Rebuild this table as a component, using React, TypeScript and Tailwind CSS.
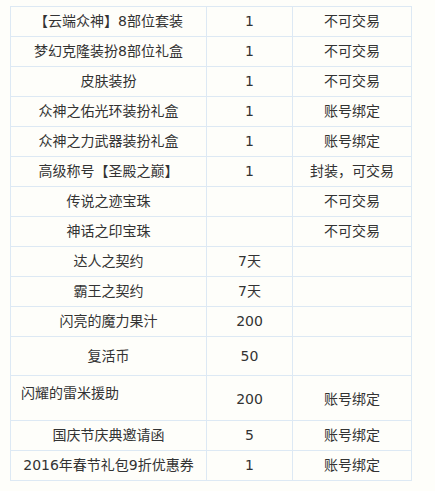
import React from "react";

const rows = [
  { name: "【云端众神】8部位套装", count: "1", note: "不可交易" },
  { name: "梦幻克隆装扮8部位礼盒", count: "1", note: "不可交易" },
  { name: "皮肤装扮", count: "1", note: "不可交易" },
  { name: "众神之佑光环装扮礼盒", count: "1", note: "账号绑定" },
  { name: "众神之力武器装扮礼盒", count: "1", note: "账号绑定" },
  { name: "高级称号【圣殿之巅】", count: "1", note: "封装，可交易" },
  { name: "传说之迹宝珠", count: "", note: "不可交易" },
  { name: "神话之印宝珠", count: "", note: "不可交易" },
  { name: "达人之契约", count: "7天", note: "" },
  { name: "霸王之契约", count: "7天", note: "" },
  { name: "闪亮的魔力果汁", count: "200", note: "" },
];

const cell = "border border-[#dde9f4] text-center align-middle p-0";

export default function App() {
  return (
    <div
      className="min-h-screen bg-[#fefefa] pl-[10px] pt-[6px] text-[14px] text-[#333333]"
      style={{ fontFamily: '"DejaVu Sans", "Noto Sans CJK SC", sans-serif' }}
    >
      <table className="table-fixed border-collapse">
        <tbody>
          {rows.map((row, i) => (
            <tr key={i} className="h-[30px]">
              <td className={`${cell} w-[196px]`}>{row.name}</td>
              <td className={`${cell} w-[86px]`}>{row.count}</td>
              <td className={`${cell} w-[119px]`}>{row.note}</td>
            </tr>
          ))}
          <tr className="h-[39px]">
            <td className={cell}>复活币</td>
            <td className={cell}>50</td>
            <td className={cell}></td>
          </tr>
          <tr className="h-[45px]">
            <td className="border border-[#dde9f4] p-0 pl-[10px] pt-[7px] text-left align-top">
              闪耀的雷米援助
            </td>
            <td className={`${cell} pt-[3px]`}>200</td>
            <td className={`${cell} pt-[3px]`}>账号绑定</td>
          </tr>
          <tr className="h-[30px]">
            <td className={cell}>国庆节庆典邀请函</td>
            <td className={cell}>5</td>
            <td className={cell}>账号绑定</td>
          </tr>
          <tr className="h-[30px]">
            <td className={cell}>2016年春节礼包9折优惠券</td>
            <td className={cell}>1</td>
            <td className={cell}>账号绑定</td>
          </tr>
        </tbody>
      </table>
    </div>
  );
}
